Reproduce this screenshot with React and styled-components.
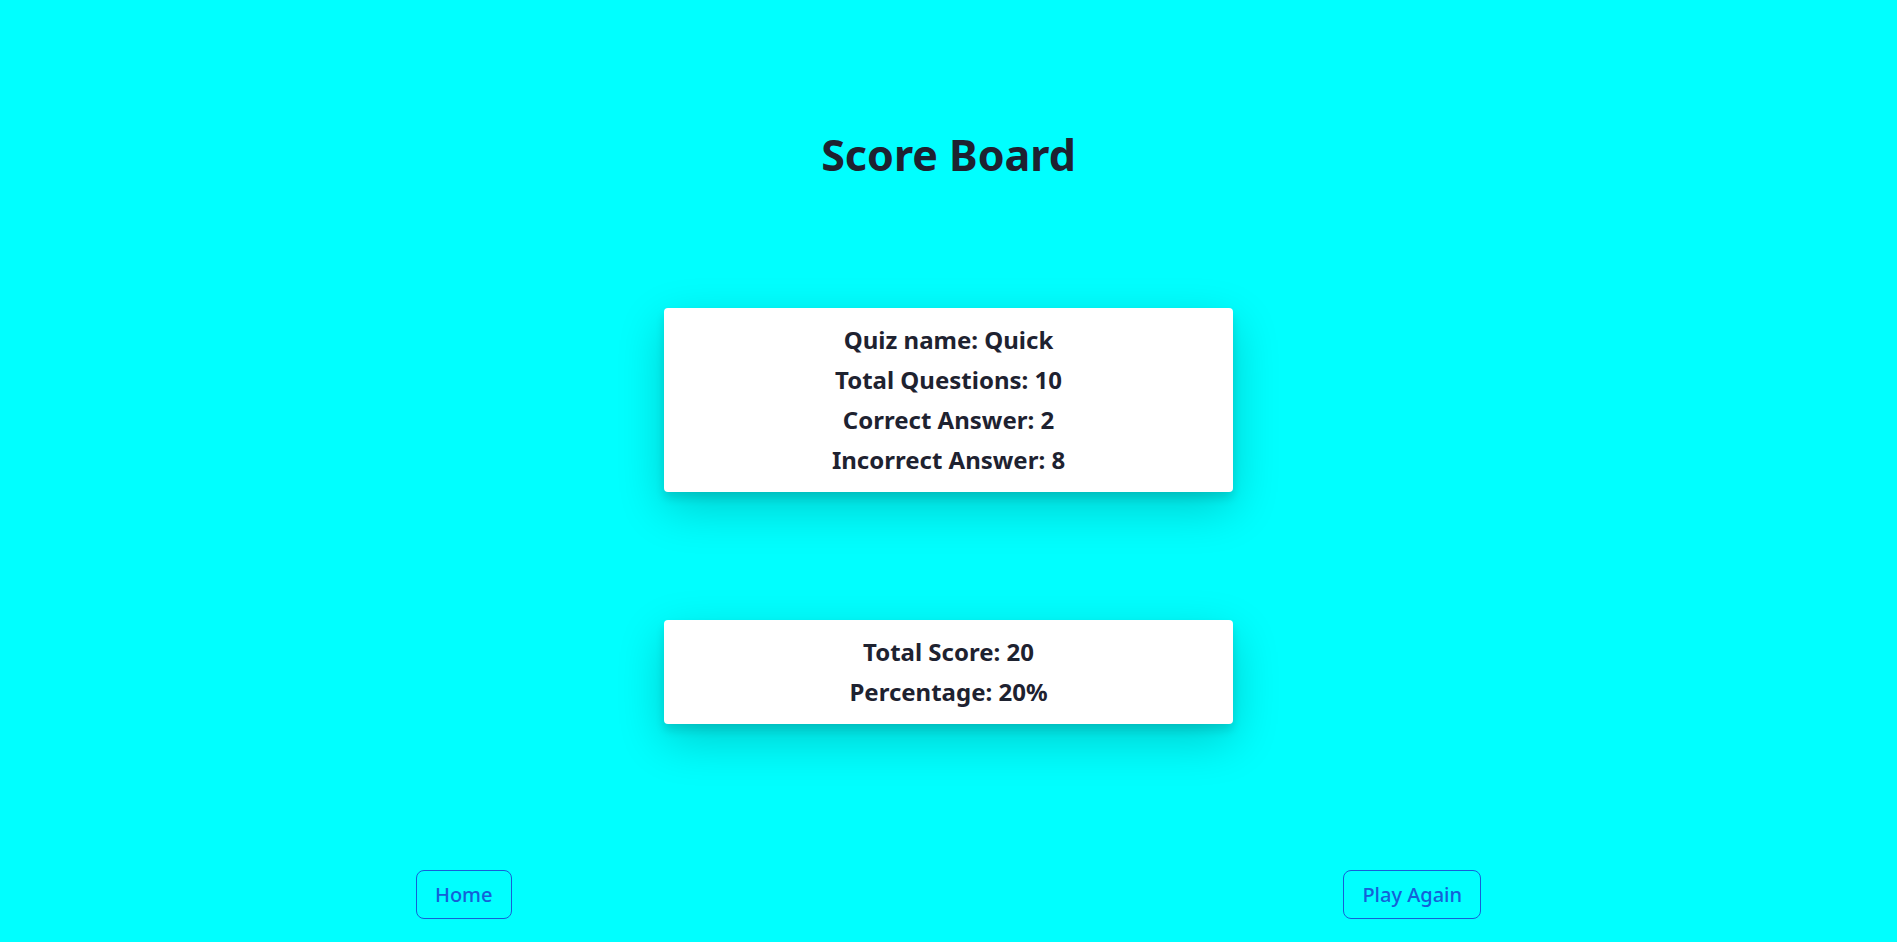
import React from "react";
import styled, { createGlobalStyle } from "styled-components";

const GlobalStyle = createGlobalStyle`
  html, body {
    margin: 0;
    padding: 0;
    background: #00ffff;
  }
  body {
    font-family: "Noto Sans", "Open Sans", sans-serif;
    color: #212529;
  }
  * { box-sizing: border-box; }
`;

const Page = styled.main`
  min-height: 942px;
  display: flex;
  flex-direction: column;
  align-items: stretch;
  padding-top: 129px;
`;

const Title = styled.h1`
  margin: 0;
  text-align: center;
  font-size: 43px;
  line-height: 1.2;
  font-weight: 700;
  color: #1e2230;
`;

const Card = styled.section`
  width: 30%;
  align-self: center;
  margin-top: ${(p) => p.$gap}px;
  background: #ffffff;
  border-radius: 4px;
  padding: 12px;
  box-shadow: 0 1rem 3rem rgba(0, 0, 0, 0.2), 0 6px 10px rgba(0, 0, 0, 0.12);
  text-align: center;
`;

const Line = styled.p`
  margin: 0;
  font-size: 24px;
  line-height: 40px;
  font-weight: 700;
  color: #1e2230;
`;

const Actions = styled.div`
  display: flex;
  justify-content: space-around;
  margin-top: 146px;
`;

const Button = styled.button`
  font-family: "Noto Sans", "Open Sans", sans-serif;
  font-size: 20px;
  line-height: 31px;
  font-weight: 500;
  padding: 8px 18px;
  color: #1560d8;
  background: transparent;
  border: 1px solid #1560d8;
  border-radius: 8px;
  cursor: pointer;
`;

export default function App() {
  return (
    <>
      <GlobalStyle />
      <Page>
        <Title>Score Board</Title>
        <Card $gap={127}>
          <Line>Quiz name: Quick</Line>
          <Line>Total Questions: 10</Line>
          <Line>Correct Answer: 2</Line>
          <Line>Incorrect Answer: 8</Line>
        </Card>
        <Card $gap={128}>
          <Line>Total Score: 20</Line>
          <Line>Percentage: 20%</Line>
        </Card>
        <Actions>
          <Button>Home</Button>
          <Button>Play Again</Button>
        </Actions>
      </Page>
    </>
  );
}
